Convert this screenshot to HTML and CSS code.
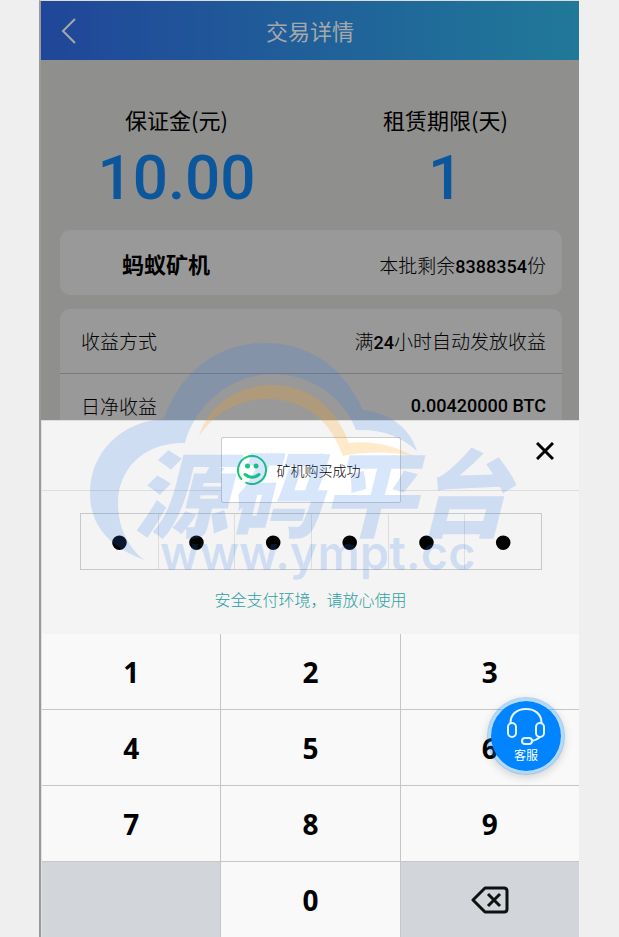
FILE: index.html
```html
<!DOCTYPE html>
<html lang="zh-CN">
<head>
<meta charset="utf-8">
<meta name="viewport" content="width=device-width, initial-scale=1">
<title>交易详情</title>
<link rel="stylesheet" href="styles.css">
</head>
<body>
<main class="phone">
  <header class="topbar">
    <button class="back" type="button" aria-label="返回">
      <svg width="16" height="26" viewBox="0 0 16 26"><path d="M14 1 2 13l12 12"/></svg>
    </button>
    <h1>交易详情</h1>
  </header>

  <section class="detail">
    <div class="stats">
      <div class="stat"><span class="stat-label">保证金(元)</span><strong>10.00</strong></div>
      <div class="stat"><span class="stat-label">租赁期限(天)</span><strong>1</strong></div>
    </div>
    <div class="card product">
      <h2>蚂蚁矿机</h2>
      <span class="remain">本批剩余<span class="num">8388354</span>份</span>
    </div>
    <dl class="card list">
      <div class="row"><dt>收益方式</dt><dd>满<span class="num">24</span>小时自动发放收益</dd></div>
      <div class="row last"><dt>日净收益</dt><dd class="num">0.00420000 BTC</dd></div>
    </dl>
  </section>

  <section class="sheet">
    <div class="sheet-head">
      <button class="close" type="button" aria-label="关闭">
        <svg width="18" height="18" viewBox="0 0 18 18"><path d="M1 1l16 16M17 1 1 17"/></svg>
      </button>
    </div>
    <div class="pin">
      <input type="password" maxlength="1" value="1" aria-label="密码第1位">
      <input type="password" maxlength="1" value="1" aria-label="密码第2位">
      <input type="password" maxlength="1" value="1" aria-label="密码第3位">
      <input type="password" maxlength="1" value="1" aria-label="密码第4位">
      <input type="password" maxlength="1" value="1" aria-label="密码第5位">
      <input type="password" maxlength="1" value="1" aria-label="密码第6位">
    </div>
    <p class="safe">安全支付环境，请放心使用</p>
    <div class="keypad">
      <button type="button">1</button><button type="button">2</button><button type="button">3</button>
      <button type="button">4</button><button type="button">5</button><button type="button">6</button>
      <button type="button">7</button><button type="button">8</button><button type="button">9</button>
      <span class="blank"></span><button type="button">0</button>
      <button class="blank" type="button" aria-label="删除">
        <svg width="38" height="28" viewBox="0 0 38 28"><path class="thick" d="M14 2h19q3 0 3 3v18q0 3-3 3H14L2 14Z"/><path d="M17 8l12 12M29 8 17 20"/></svg>
      </button>
    </div>
    <div class="toast" role="status">
      <svg width="30" height="30" viewBox="0 0 30 30"><path d="M5 24.800A14 14 0 1 1 8.500 27.400"/><path class="smile" d="M8 19.500q7 5.500 14 0"/><circle cx="10.500" cy="11" r="2.500"/><circle cx="19" cy="11" r="2.500"/></svg>
      <span>矿机购买成功</span>
    </div>
  </section>

  <svg class="watermark" width="430" height="250" viewBox="90 340 430 250" aria-hidden="true">
    <path class="blue" d="M144 560C105 545 90 522 90 493C90 452 122 421 164 419C180 372 218 343 265 343C312 343 345 370 363 410C390 413 410 428 417 451C400 435 380 429 356 430C342 394 308 374 273 374C230 374 195 405 185 443C145 442 118 468 118 503C118 528 128 547 144 560Z"/>
    <path class="orange" d="M199 436C210 404 238 385 273 385C312 385 338 412 349 443C374 440 394 446 414 456C392 452 368 451 343 456C330 420 305 399 267 399C238 399 215 413 199 436Z"/>
    <text class="brand" x="134" y="530">源码平台</text>
    <text class="site" x="160" y="570">www.ympt.cc</text>
  </svg>

  <a class="service" href="#service">
    <svg width="40" height="38" viewBox="0 0 40 38"><path d="M4.500 16C4.500 7 11 2 20 2s15.500 5 15.500 14"/><rect x="2" y="16" width="8" height="14" rx="4"/><rect x="30" y="16" width="8" height="14" rx="4"/><path d="M34 30q-3 3-8 4"/><rect x="16" y="31" width="10" height="6" rx="3"/></svg>
    <span>客服</span>
  </a>
</main>
</body>
</html>
```
FILE: styles.css
```css
* { box-sizing: border-box; }

body {
  margin: 0;
  padding: 0 40px 0 39px;
  background: #efefef;
  color: #000;
  font-family: "Noto Sans CJK SC", sans-serif;
  font-weight: 300;
}

h1, h2, p, dl, dd { margin: 0; }

button {
  margin: 0;
  padding: 0;
  border: 0;
  background: none;
  color: inherit;
  font: inherit;
}

svg { display: block; flex: none; fill: none; }

.phone {
  position: relative;
  min-height: 100vh;
  border-top: 1px solid #ddd;
  border-left: 2px solid #999;
  background: #8f8f8d;
}

.topbar {
  display: grid;
  grid-template-columns: 56px 1fr 56px;
  align-items: center;
  height: 59px;
  background: linear-gradient(90deg, #204699, #207999);
  color: #a6a9ac;
}

.back { justify-self: center; }
.back svg { stroke: #a6a9ac; stroke-width: 2; }

h1 {
  padding-bottom: 2px;
  text-align: center;
  font-size: 22px;
  font-weight: 400;
  line-height: 30px;
}

.detail { padding: 43px 17px 0 19px; }

.stats {
  display: grid;
  grid-template-columns: 1fr 1fr;
  padding-bottom: 9px;
  text-align: center;
}

.stat { display: flex; flex-direction: column; }
.stat:first-child { padding-right: 18px; }
.stat:last-child { padding-left: 18px; }
.stat-label { font-size: 22px; font-weight: 400; line-height: 32px; }

.stat strong {
  color: #0c579c;
  font: 500 62px/86px Roboto, sans-serif;
}

.card {
  border-radius: 10px;
  background: #999;
  font-size: 19px;
  line-height: 26px;
}

.num { font-family: Roboto, sans-serif; font-size: 18px; font-weight: 500; }

.product {
  display: flex;
  align-items: center;
  justify-content: space-between;
  height: 65px;
  margin-bottom: 14px;
  padding: 0 16px 0 62px;
}

.remain { padding-top: 6px; }

h2 { font-size: 22px; font-weight: 700; }

.list { border-radius: 10px 10px 0 0; }

.row {
  display: flex;
  justify-content: space-between;
  height: 65px;
  padding: 19px 16px 0 21px;
  border-bottom: 1px solid #7a7a7a;
}

.row.last { height: 46px; border-bottom: 0; }

.sheet {
  position: relative;
  border-top: 1px solid #ddd;
  border-left: 1px solid #e2e2e2;
  background: #f4f4f4;
}

.sheet-head {
  display: flex;
  align-items: flex-start;
  justify-content: flex-end;
  height: 70px;
  padding: 21px 25px 0 0;
  border-bottom: 1px solid #ddd;
}

.close svg { stroke: #000; stroke-width: 3; }

.pin {
  display: grid;
  grid-template-columns: repeat(6, 1fr);
  grid-template-rows: 100%;
  height: 57px;
  margin: 22px 37px 0 38px;
  border: 1px solid #c8c8c8;
}

.pin input {
  width: 100%;
  min-width: 0;
  height: 100%;
  padding: 0;
  border: 0;
  border-left: 1px solid #ddd;
  border-radius: 0;
  background: none;
  color: #000;
  font: 54px "Liberation Sans", sans-serif;
  text-align: center;
  outline: 0;
}

.pin input:first-child { border-left: 0; }

.safe {
  padding: 17px 0 23px;
  color: #2ba0a0;
  font-size: 16px;
  line-height: 24px;
  text-align: center;
}

.keypad {
  display: grid;
  grid-template-columns: repeat(3, 1fr);
  grid-auto-rows: 75px;
  gap: 1px;
  background: #c6c6c6;
}

.keypad > * {
  display: flex;
  align-items: center;
  justify-content: center;
  background: #f9f9f9;
  font: 700 28px "Open Sans", sans-serif;
}

.keypad .blank { background: #d2d5da; }
.keypad svg { stroke: #111; stroke-width: 3; }
.keypad .thick { stroke-linejoin: round; }

.toast {
  position: absolute;
  top: 16px;
  left: 50%;
  display: flex;
  align-items: center;
  gap: 10px;
  width: 180px;
  height: 66px;
  padding-left: 15px;
  border: 1px solid #ccc;
  border-radius: 2px;
  background: #fff;
  font-size: 14px;
  transform: translateX(-50%);
}

.toast svg { stroke: #18c877; stroke-width: 2; }
.toast .smile { stroke-width: 3; stroke-linecap: round; }
.toast circle { fill: #18c877; stroke: none; }

.watermark {
  position: absolute;
  top: 339px;
  left: 50%;
  margin-left: -220px;
  overflow: visible;
  pointer-events: none;
}

.watermark .blue, .watermark text { fill: rgba(49, 123, 239, .19); }
.watermark .orange { fill: rgba(255, 165, 20, .22); }
.brand { font: italic 900 94px "Noto Sans CJK SC", sans-serif; }
.site { font: 600 47px Inter, sans-serif; }

.service {
  position: absolute;
  top: 696px;
  right: 14px;
  display: flex;
  flex-direction: column;
  align-items: center;
  width: 78px;
  height: 78px;
  padding-top: 6px;
  border: 4px solid rgba(0, 132, 255, .27);
  border-radius: 50%;
  background: #0084ff;
  background-clip: padding-box;
  box-shadow: 0 3px 8px rgba(0, 0, 0, .15);
  color: #fff;
  font-size: 12px;
  font-weight: 400;
  line-height: 18px;
  text-decoration: none;
}

.service svg { stroke: #e8f4ff; stroke-width: 2; }
.service span { padding-top: 1px; }
```
